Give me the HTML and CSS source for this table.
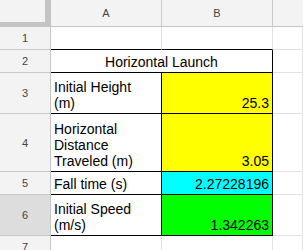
FILE: index.html
```html
<!DOCTYPE html>
<html>
<head>
<meta charset="utf-8">
<title>Horizontal Launch</title>
<link rel="stylesheet" href="styles.css">
</head>
<body>
<div class="sheet">
  <!-- column headers -->
  <div class="corner"></div>
  <div class="colhead">A</div>
  <div class="colhead">B</div>
  <div class="colhead last"></div>

  <!-- row 1 -->
  <div class="rowhead">1</div>
  <div class="cell top-edge"></div>
  <div class="cell top-edge"></div>
  <div class="cell"></div>

  <!-- row 2 -->
  <div class="rowhead">2</div>
  <div class="cell title b-bottom b-right">Horizontal Launch</div>
  <div class="cell"></div>

  <!-- row 3 -->
  <div class="rowhead">3</div>
  <div class="cell label b-bottom b-right">Initial Height<br>(m)</div>
  <div class="cell num yellow b-bottom b-right">25.3</div>
  <div class="cell"></div>

  <!-- row 4 -->
  <div class="rowhead">4</div>
  <div class="cell label b-bottom b-right">Horizontal<br>Distance<br>Traveled (m)</div>
  <div class="cell num yellow b-bottom b-right">3.05</div>
  <div class="cell"></div>

  <!-- row 5 -->
  <div class="rowhead">5</div>
  <div class="cell label b-bottom b-right">Fall time (s)</div>
  <div class="cell num cyan b-bottom b-right">2.27228196</div>
  <div class="cell"></div>

  <!-- row 6 -->
  <div class="rowhead active">6</div>
  <div class="cell label b-bottom b-right">Initial Speed<br>(m/s)</div>
  <div class="cell num green b-bottom b-right">1.342263</div>
  <div class="cell"></div>

  <!-- row 7 -->
  <div class="rowhead">7</div>
  <div class="cell"></div>
  <div class="cell"></div>
  <div class="cell"></div>
</div>
</body>
</html>
```

FILE: styles.css
```css
html, body {
  margin: 0;
  padding: 0;
  background: #ffffff;
  overflow: hidden;
}

.sheet {
  display: grid;
  grid-template-columns: 51px 111px 111px 1fr;
  grid-template-rows: 27px 23px 23px 41px 58px 23px 41px 23px;
  width: 303px;
  height: 250px;
  font-family: "Liberation Sans", Arial, sans-serif;
  font-size: 14px;
  line-height: 16px;
  color: #000000;
}

.sheet > div {
  box-sizing: border-box;
  min-width: 0;
  overflow: hidden;
}

/* header strip */
.corner {
  background: #f3f3f3;
  border-right: 6px solid #c4c4c4;
  border-bottom: 5px solid #c4c4c4;
}

.colhead {
  background: #f3f3f3;
  border-right: 1px solid #c8c8c8;
  border-bottom: 1px solid #c4c4c4;
  display: flex;
  align-items: center;
  justify-content: center;
  font-size: 11px;
  color: #444444;
  padding-bottom: 1px;
}

.colhead.last {
  border-right: none;
}

.rowhead {
  background: #f3f3f3;
  border-right: 1px solid #c4c4c4;
  border-bottom: 1px solid #c8c8c8;
  display: flex;
  align-items: center;
  justify-content: center;
  font-size: 11px;
  color: #444444;
}

.rowhead.active {
  background: #dddddd;
}

/* grid cells */
.cell {
  border-right: 1px solid #e2e2e2;
  border-bottom: 1px solid #e2e2e2;
  display: flex;
  align-items: flex-end;
  padding: 0 3px 2px 3px;
  white-space: nowrap;
}

.top-edge {
  border-bottom-color: #000000;
}

.b-bottom {
  border-bottom-color: #000000;
}

.b-right {
  border-right-color: #000000;
}

.title {
  grid-column: 2 / span 2;
  justify-content: center;
}

.label {
  justify-content: flex-start;
}

.num {
  justify-content: flex-end;
}

.yellow { background: #ffff00; }
.cyan { background: #00ffff; }
.green { background: #00ff00; }
```
